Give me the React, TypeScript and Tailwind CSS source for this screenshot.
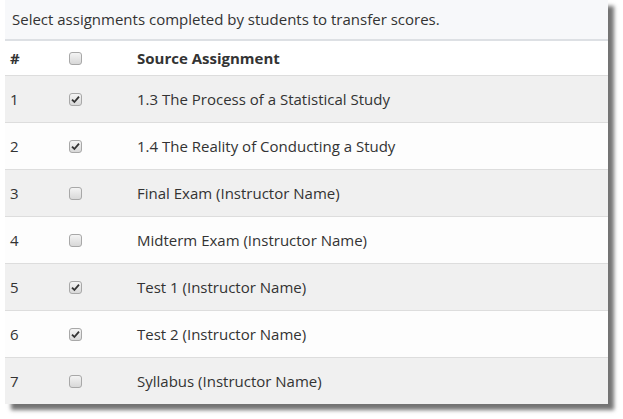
import React from "react";

const rows: [number, string, boolean][] = [
  [1, "1.3 The Process of a Statistical Study", true],
  [2, "1.4 The Reality of Conducting a Study", true],
  [3, "Final Exam (Instructor Name)", false],
  [4, "Midterm Exam (Instructor Name)", false],
  [5, "Test 1 (Instructor Name)", true],
  [6, "Test 2 (Instructor Name)", true],
  [7, "Syllabus (Instructor Name)", false],
];

function Box({ checked }: { checked: boolean }) {
  return (
    <span className="inline-flex w-[13px] h-[13px] rounded-[3px] border border-[#a8a8a8] bg-gradient-to-b from-[#f4f4f4] to-[#d8d8d8] items-center justify-center">
      {checked && (
        <svg width="9" height="9" viewBox="0 0 9 9">
          <path d="M1 4.6 L3.4 7 L8 1.6" fill="none" stroke="#333" strokeWidth="1.8" />
        </svg>
      )}
    </span>
  );
}

export default function App() {
  return (
    <div className="w-[623px] h-[419px] bg-white relative" style={{ fontFamily: '"Open Sans", "Noto Sans", sans-serif' }}>
      <div className="ml-[5px] w-[603px] h-[404px] bg-white shadow-[6px_6px_4px_rgba(0,0,0,0.55)] text-[#333] text-[15px]">
        <div className="h-[41px] bg-[#f7f8fa] border-b-2 border-[#dde0e4] flex items-center pl-[7px] text-[#333]">
          Select assignments completed by students to transfer scores.
        </div>
        <div className="h-[34px] flex items-center font-bold">
          <div className="w-[59px] pl-[5px]">#</div>
          <div className="w-[73px] pl-[5px] flex items-center"><Box checked={false} /></div>
          <div>Source Assignment</div>
        </div>
        {rows.map(([n, t, c], i) => (
          <div key={n} className={`h-[47px] flex items-center border-t border-[#dddddd] ${i % 2 === 0 ? "bg-[#f0f0f0]" : "bg-[#fdfdfd]"}`}>
            <div className="w-[59px] pl-[5px]">{n}</div>
            <div className="w-[73px] pl-[5px] flex items-center"><Box checked={c} /></div>
            <div>{t}</div>
          </div>
        ))}
      </div>
    </div>
  );
}
